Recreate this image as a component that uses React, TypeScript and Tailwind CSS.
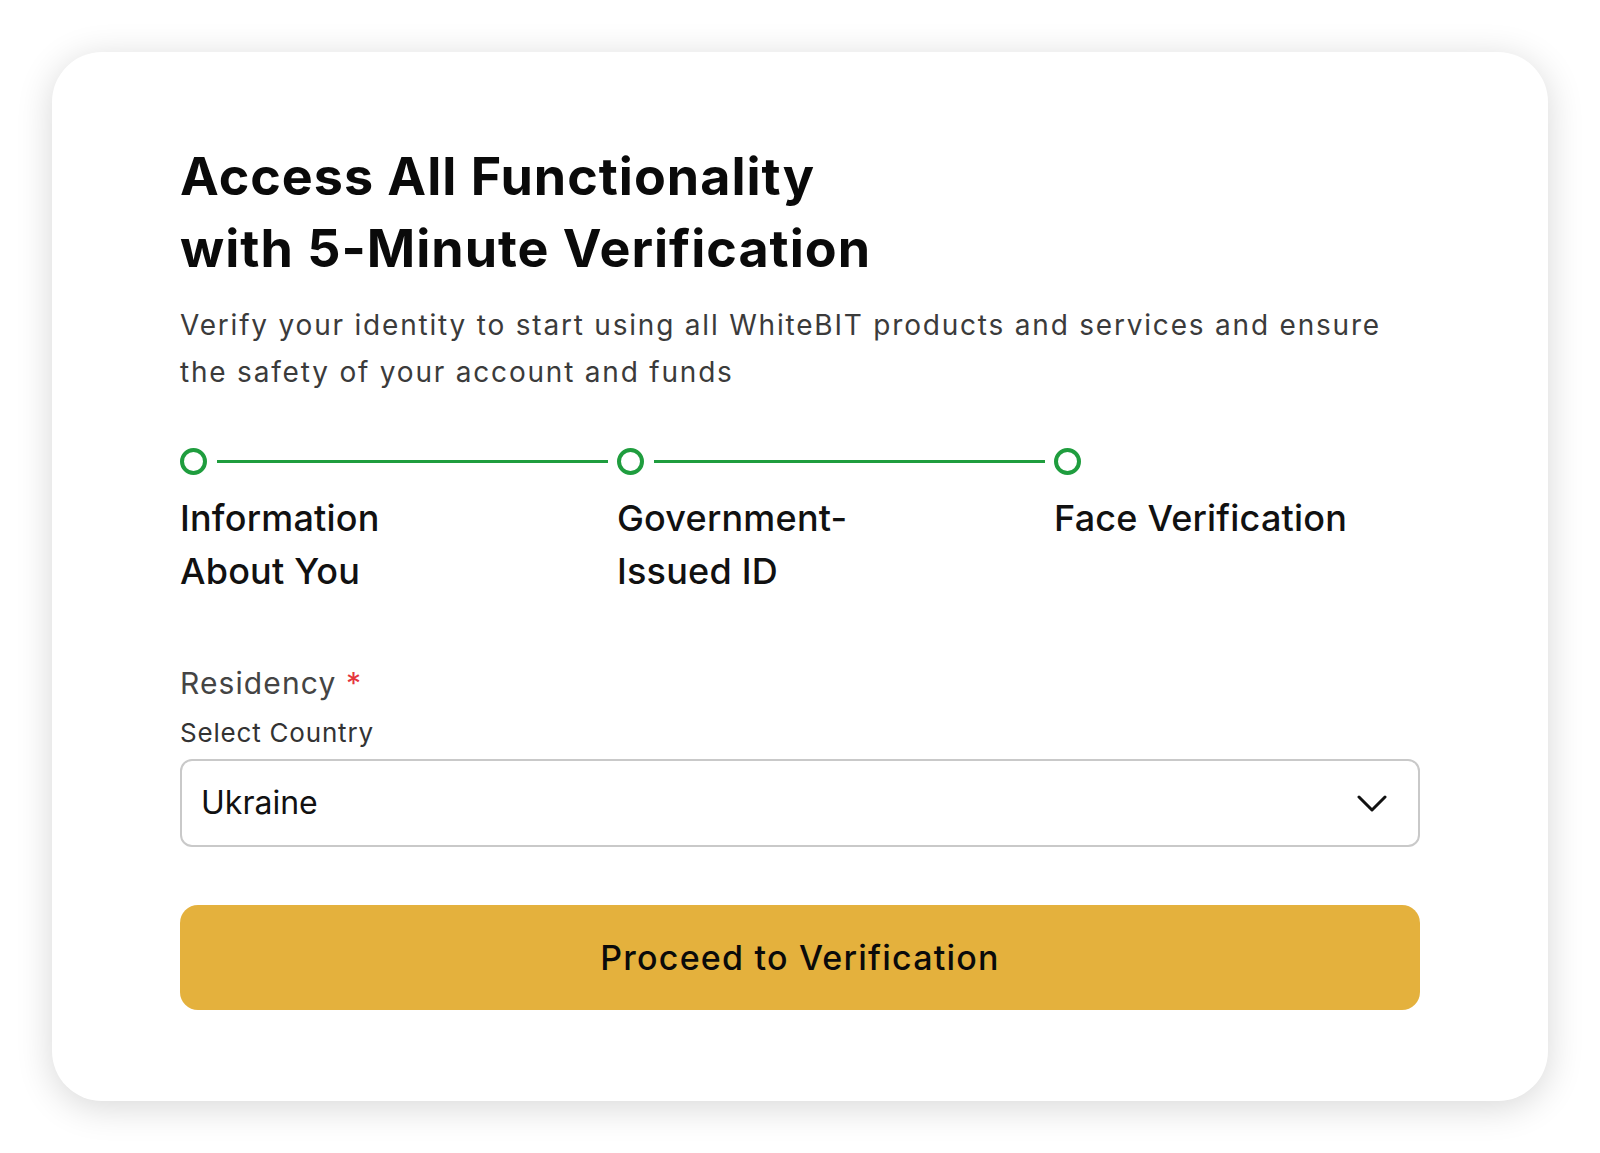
import React from "react";

const steps = [
  { id: "info", lines: ["Information", "About You"] },
  { id: "doc", lines: ["Government-", "Issued ID"] },
  { id: "face", lines: ["Face Verification"] },
];

const Stepper: React.FC = () => {
  return (
    <div className="mt-[52px] flex">
      {steps.map((step, i) => {
        const last = i === steps.length - 1;
        return (
          <div key={step.id} className={last ? "flex-1" : "w-[437px] shrink-0"}>
            <div className="flex h-[27px] items-center">
              <span className="h-[27px] w-[27px] shrink-0 rounded-full border-[4px] border-[#1f9d3e]" />
              {!last && <span className="ml-[10px] mr-[9px] h-[3px] flex-1 bg-[#1f9d3e]" />}
            </div>
            <p className="mt-[17px] text-[36px] font-medium leading-[53px] tracking-[0.2px] text-[#111]">
              {step.lines.map((line, j) => (
                <React.Fragment key={j}>
                  {j > 0 && <br />}
                  {line}
                </React.Fragment>
              ))}
            </p>
          </div>
        );
      })}
    </div>
  );
};

const CountrySelect: React.FC = () => {
  return (
    <button
      type="button"
      className="mt-[8px] flex h-[88px] w-full items-center justify-between rounded-[12px] border-2 border-[#c9c9c9] bg-white pl-[19px] pr-[31px] text-left"
    >
      <span className="text-[32px] leading-none text-[#111]">Ukraine</span>
      <svg width="30" height="17" viewBox="0 0 30 17" fill="none" className="shrink-0">
        <path d="M2 2L15 15L28 2" stroke="#111" strokeWidth="3" strokeLinecap="round" strokeLinejoin="round" />
      </svg>
    </button>
  );
};

export default function App() {
  return (
    <div className="min-h-screen bg-white p-[52px] font-['Inter','Liberation_Sans',sans-serif]">
      <div className="rounded-[50px] bg-white px-[128px] pb-[91px] pt-[89px] shadow-[0_6px_36px_rgba(0,0,0,0.16)]">
        <h1 className="text-[52px] font-bold leading-[72px] tracking-[1px] text-[#0a0a0a]">
          Access All Functionality
          <br />
          with 5-Minute Verification
        </h1>
        <p className="mt-[17px] text-[28px] leading-[47px] tracking-[1.8px] text-[#3b3b3b]">
          Verify your identity to start using all WhiteBIT products and services and ensure
          <br />
          the safety of your account and funds
        </p>

        <Stepper />

        <div className="mt-[65px]">
          <label className="block text-[30px] leading-[40px] tracking-[1.1px] text-[#444]">
            Residency <span className="text-[#e5363d]">*</span>
          </label>
          <p className="mt-[12px] text-[26px] leading-[36px] tracking-[0.8px] text-[#333]">Select Country</p>
          <CountrySelect />
        </div>

        <button
          type="button"
          className="mt-[58px] flex h-[105px] w-full items-center justify-center rounded-[18px] bg-[#e4b13d] text-[34px] font-medium tracking-[1.2px] text-[#0a0a0a]"
        >
          Proceed to Verification
        </button>
      </div>
    </div>
  );
}
